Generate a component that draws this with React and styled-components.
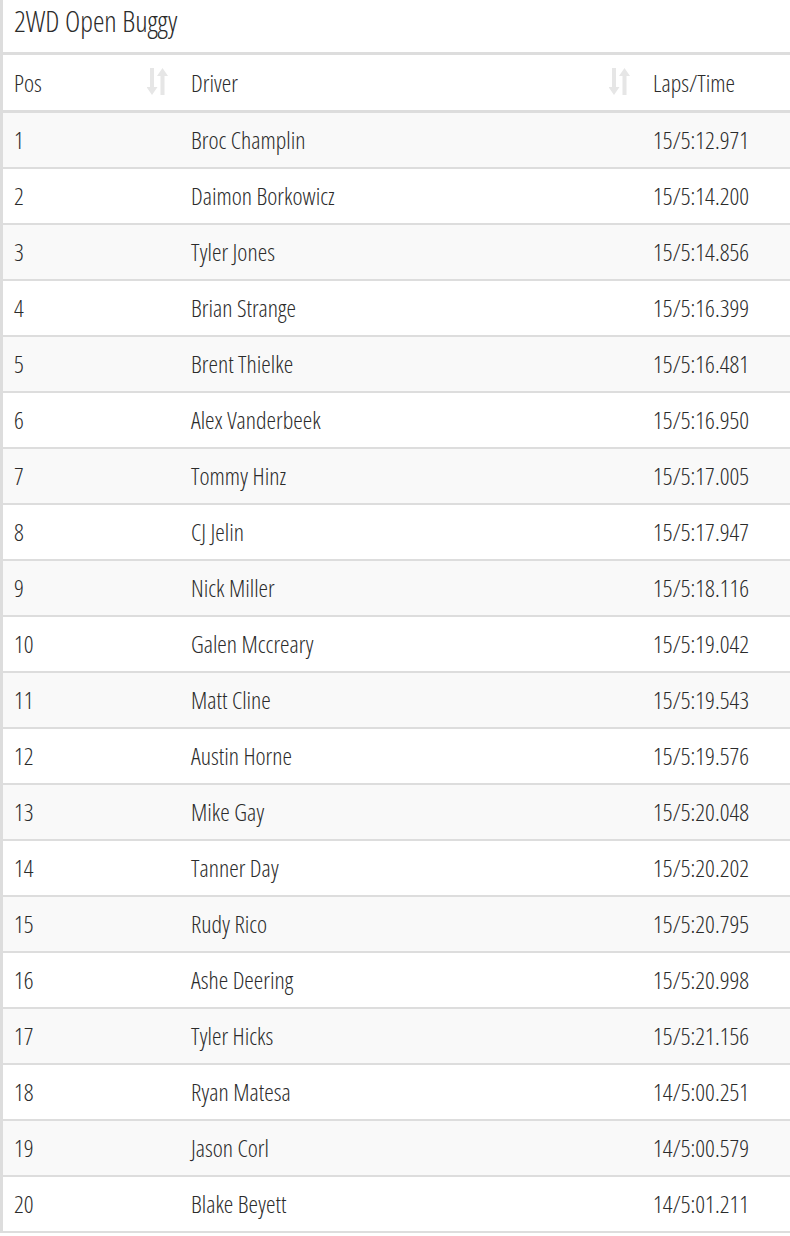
import React from 'react'
import styled, { createGlobalStyle } from 'styled-components'

const Global = createGlobalStyle`
  body {
    margin: 0;
    background: #fff;
    font-family: "Open Sans", "Liberation Sans", sans-serif;
    font-stretch: 75%;
    font-weight: 330;
    color: #2b2b2b;
  }
`

const Panel = styled.div`
  width: 860px;
  border-left: 3px solid #ddd;
`

const Title = styled.h2`
  margin: 0;
  height: 55px;
  box-sizing: border-box;
  border-bottom: 3px solid #ddd;
  padding: 5px 11px 0;
  font-size: 29px;
  line-height: 1.1;
  font-weight: 330;
`

const Table = styled.table`
  width: 100%;
  border-collapse: collapse;
  table-layout: fixed;
  font-size: 24px;
`

const HeadCell = styled.th`
  height: 56px;
  padding: 0 11px;
  text-align: left;
  font-weight: 330;
  border-bottom: 3px solid #ddd;
  position: relative;
  width: ${p => p.$w || 'auto'};
  box-sizing: border-box;
`

const SortIcon = styled.svg`
  position: absolute;
  right: 9px;
  top: 13px;
`

const Row = styled.tr`
  background: ${p => (p.$odd ? '#f9f9f9' : '#fff')};
`

const Cell = styled.td`
  height: 54px;
  padding: 0 11px;
  border-bottom: 2px solid #ddd;
  white-space: nowrap;
`

const Sort = () => (
  <SortIcon width="24" height="28" viewBox="0 0 24 28" fill="#e6e6e6">
    <path d="M3 0h4v19h3.5l-5.5 8-5.5-8h3.5z" />
    <path d="M17.5 27V8h3.5l-5.5-8-5.5 8h3.5v19z" />
  </SortIcon>
)

const results = [
  ['Broc Champlin', '15/5:12.971'],
  ['Daimon Borkowicz', '15/5:14.200'],
  ['Tyler Jones', '15/5:14.856'],
  ['Brian Strange', '15/5:16.399'],
  ['Brent Thielke', '15/5:16.481'],
  ['Alex Vanderbeek', '15/5:16.950'],
  ['Tommy Hinz', '15/5:17.005'],
  ['CJ Jelin', '15/5:17.947'],
  ['Nick Miller', '15/5:18.116'],
  ['Galen Mccreary', '15/5:19.042'],
  ['Matt Cline', '15/5:19.543'],
  ['Austin Horne', '15/5:19.576'],
  ['Mike Gay', '15/5:20.048'],
  ['Tanner Day', '15/5:20.202'],
  ['Rudy Rico', '15/5:20.795'],
  ['Ashe Deering', '15/5:20.998'],
  ['Tyler Hicks', '15/5:21.156'],
  ['Ryan Matesa', '14/5:00.251'],
  ['Jason Corl', '14/5:00.579'],
  ['Blake Beyett', '14/5:01.211'],
]

export default function App() {
  return (
    <>
      <Global />
      <Panel>
        <Title>2WD Open Buggy</Title>
        <Table>
          <thead>
            <tr>
              <HeadCell $w="177px">Pos<Sort /></HeadCell>
              <HeadCell $w="462px">Driver<Sort /></HeadCell>
              <HeadCell>Laps/Time</HeadCell>
            </tr>
          </thead>
          <tbody>
            {results.map(([name, time], i) => (
              <Row key={name} $odd={i % 2 === 0}>
                <Cell>{i + 1}</Cell>
                <Cell>{name}</Cell>
                <Cell>{time}</Cell>
              </Row>
            ))}
          </tbody>
        </Table>
      </Panel>
    </>
  )
}
